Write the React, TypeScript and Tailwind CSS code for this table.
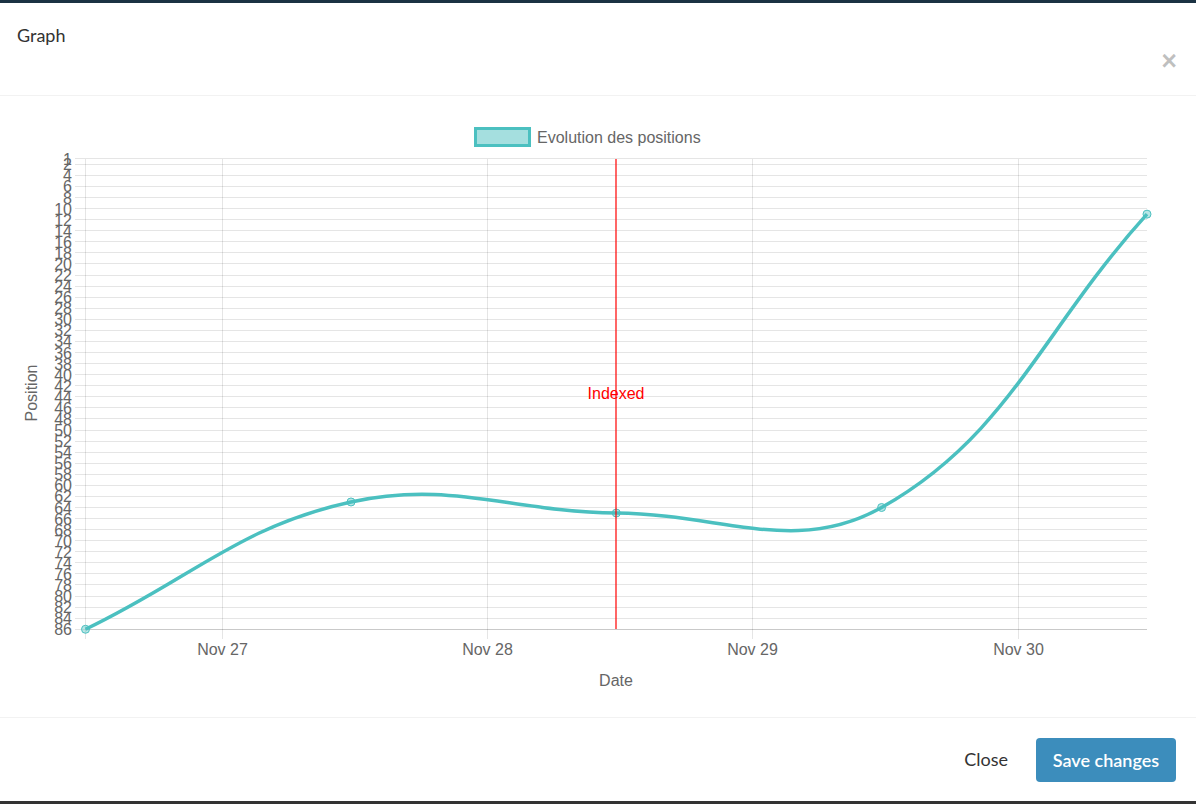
import React from "react";

const TEAL = "#4bc0c0";
const LEFT = 85.5;
const RIGHT = 1147;
const TOP = 158.8;
const BOTTOM = 629;

function yOf(v: number) {
  return TOP + (v - 1) * 5.535;
}
function crisp(n: number) {
  return Math.round(n - 0.5) + 0.5;
}

const xs = [85.5, 351, 616.3, 881.6, 1147];
const data = [86, 63, 65, 64, 11];
const ticks = [1, ...Array.from({ length: 43 }, (_, i) => (i + 1) * 2)];
const xGrid = [
  { x: 222.5, label: "Nov 27" },
  { x: 487.5, label: "Nov 28" },
  { x: 752.5, label: "Nov 29" },
  { x: 1018.5, label: "Nov 30" },
];

function buildPath() {
  const pts = xs.map((x, i) => ({ x, y: yOf(data[i]) }));
  const t = 0.4;
  const cap = (v: number, a: number, b: number) => Math.max(a, Math.min(b, v));
  const cps = pts.map((p, i) => {
    const prev = pts[i - 1] || p;
    const next = pts[i + 1] || p;
    const d01 = Math.hypot(p.x - prev.x, p.y - prev.y);
    const d12 = Math.hypot(next.x - p.x, next.y - p.y);
    let s01 = d01 / (d01 + d12);
    let s12 = d12 / (d01 + d12);
    if (isNaN(s01)) s01 = 0;
    if (isNaN(s12)) s12 = 0;
    const fa = t * s01;
    const fb = t * s12;
    return {
      px: cap(p.x - fa * (next.x - prev.x), LEFT, RIGHT),
      py: cap(p.y - fa * (next.y - prev.y), TOP, BOTTOM),
      nx: cap(p.x + fb * (next.x - prev.x), LEFT, RIGHT),
      ny: cap(p.y + fb * (next.y - prev.y), TOP, BOTTOM),
    };
  });
  let d = `M ${pts[0].x} ${pts[0].y}`;
  for (let i = 1; i < pts.length; i++) {
    d += ` C ${cps[i - 1].nx} ${cps[i - 1].ny} ${cps[i].px} ${cps[i].py} ${pts[i].x} ${pts[i].y}`;
  }
  return { d, pts };
}

const FONT = "'Liberation Sans', Arial, sans-serif";

function Chart() {
  const { d, pts } = buildPath();
  return (
    <svg width={1196} height={621} viewBox="0 96 1196 621" className="block">
      {/* legend */}
      <rect x={475.5} y={128.5} width={54} height={17} fill="rgba(75,192,192,0.5)" stroke={TEAL} strokeWidth={3} />
      <text x={537} y={137} dominantBaseline="central" fill="#666" fontSize={16} fontFamily={FONT}>
        Evolution des positions
      </text>

      {/* horizontal gridlines */}
      {ticks.map((v) => (
        <line key={"h" + v} x1={75} x2={RIGHT} y1={crisp(yOf(v))} y2={crisp(yOf(v))} stroke="rgba(0,0,0,0.1)" strokeWidth={1} />
      ))}
      {/* bottom axis */}
      <line x1={LEFT} x2={RIGHT} y1={629.5} y2={629.5} stroke="rgba(0,0,0,0.12)" strokeWidth={1} />
      {/* left axis */}
      <line x1={LEFT} x2={LEFT} y1={159} y2={639} stroke="rgba(0,0,0,0.1)" strokeWidth={1} />
      {/* vertical gridlines */}
      {xGrid.map((g) => (
        <line key={g.label} x1={g.x} x2={g.x} y1={159} y2={639} stroke="rgba(0,0,0,0.1)" strokeWidth={1} />
      ))}

      {/* y tick labels */}
      {ticks.map((v) => (
        <text key={"t" + v} x={72} y={yOf(v) + 0.5} textAnchor="end" dominantBaseline="central" fill="#666" fontSize={16} fontFamily={FONT}>
          {v}
        </text>
      ))}
      {/* x tick labels */}
      {xGrid.map((g) => (
        <text key={"l" + g.label} x={g.x} y={649} textAnchor="middle" dominantBaseline="central" fill="#666" fontSize={16} fontFamily={FONT}>
          {g.label}
        </text>
      ))}
      <text x={616} y={680} textAnchor="middle" dominantBaseline="central" fill="#666" fontSize={16} fontFamily={FONT}>
        Date
      </text>
      <text x={31} y={393} textAnchor="middle" dominantBaseline="central" fill="#666" fontSize={16} fontFamily={FONT} transform="rotate(-90 31 393)">
        Position
      </text>

      {/* data line */}
      <path d={d} fill="none" stroke={TEAL} strokeWidth={3.5} strokeLinejoin="round" />
      {pts.map((p, i) => (
        <circle key={i} cx={p.x} cy={p.y} r={4} fill="rgba(75,192,192,0.4)" stroke={TEAL} strokeWidth={1} />
      ))}

      {/* indexed marker */}
      <line x1={616} x2={616} y1={159} y2={629} stroke="#ff0000" strokeWidth={1.2} />
      <text x={616} y={393} textAnchor="middle" dominantBaseline="central" fill="#ff0000" fontSize={16} fontFamily={FONT}>
        Indexed
      </text>
    </svg>
  );
}

export default function App() {
  return (
    <div className="w-[1196px] h-[804px] bg-white flex flex-col overflow-hidden font-['Lato',sans-serif] text-[#333]">
      <div className="h-[3px] bg-[#1b3243]" />
      <header className="h-[93px] border-b border-[#f2f2f2] flex justify-between pl-[17px] pr-[19px]">
        <h4 className="pt-[20px] text-[18px] leading-[24px] font-normal">Graph</h4>
        <button className="self-end mb-[20px] text-[27px] font-bold leading-none text-black/25 font-['Liberation_Sans',sans-serif]">
          ×
        </button>
      </header>
      <main className="h-[621px]">
        <Chart />
      </main>
      <footer className="h-[84px] border-t border-[#f2f2f2] flex items-center justify-end pr-[20px] gap-[28px]">
        <button className="text-[18px] leading-[24px] text-[#333] -mt-[2px]">Close</button>
        <button className="w-[140px] h-[44px] rounded-[4px] bg-[#3c8dbc] text-white text-[18px] font-semibold leading-[24px]">
          Save changes
        </button>
      </footer>
      <div className="h-[3px] bg-[#333]" />
    </div>
  );
}
